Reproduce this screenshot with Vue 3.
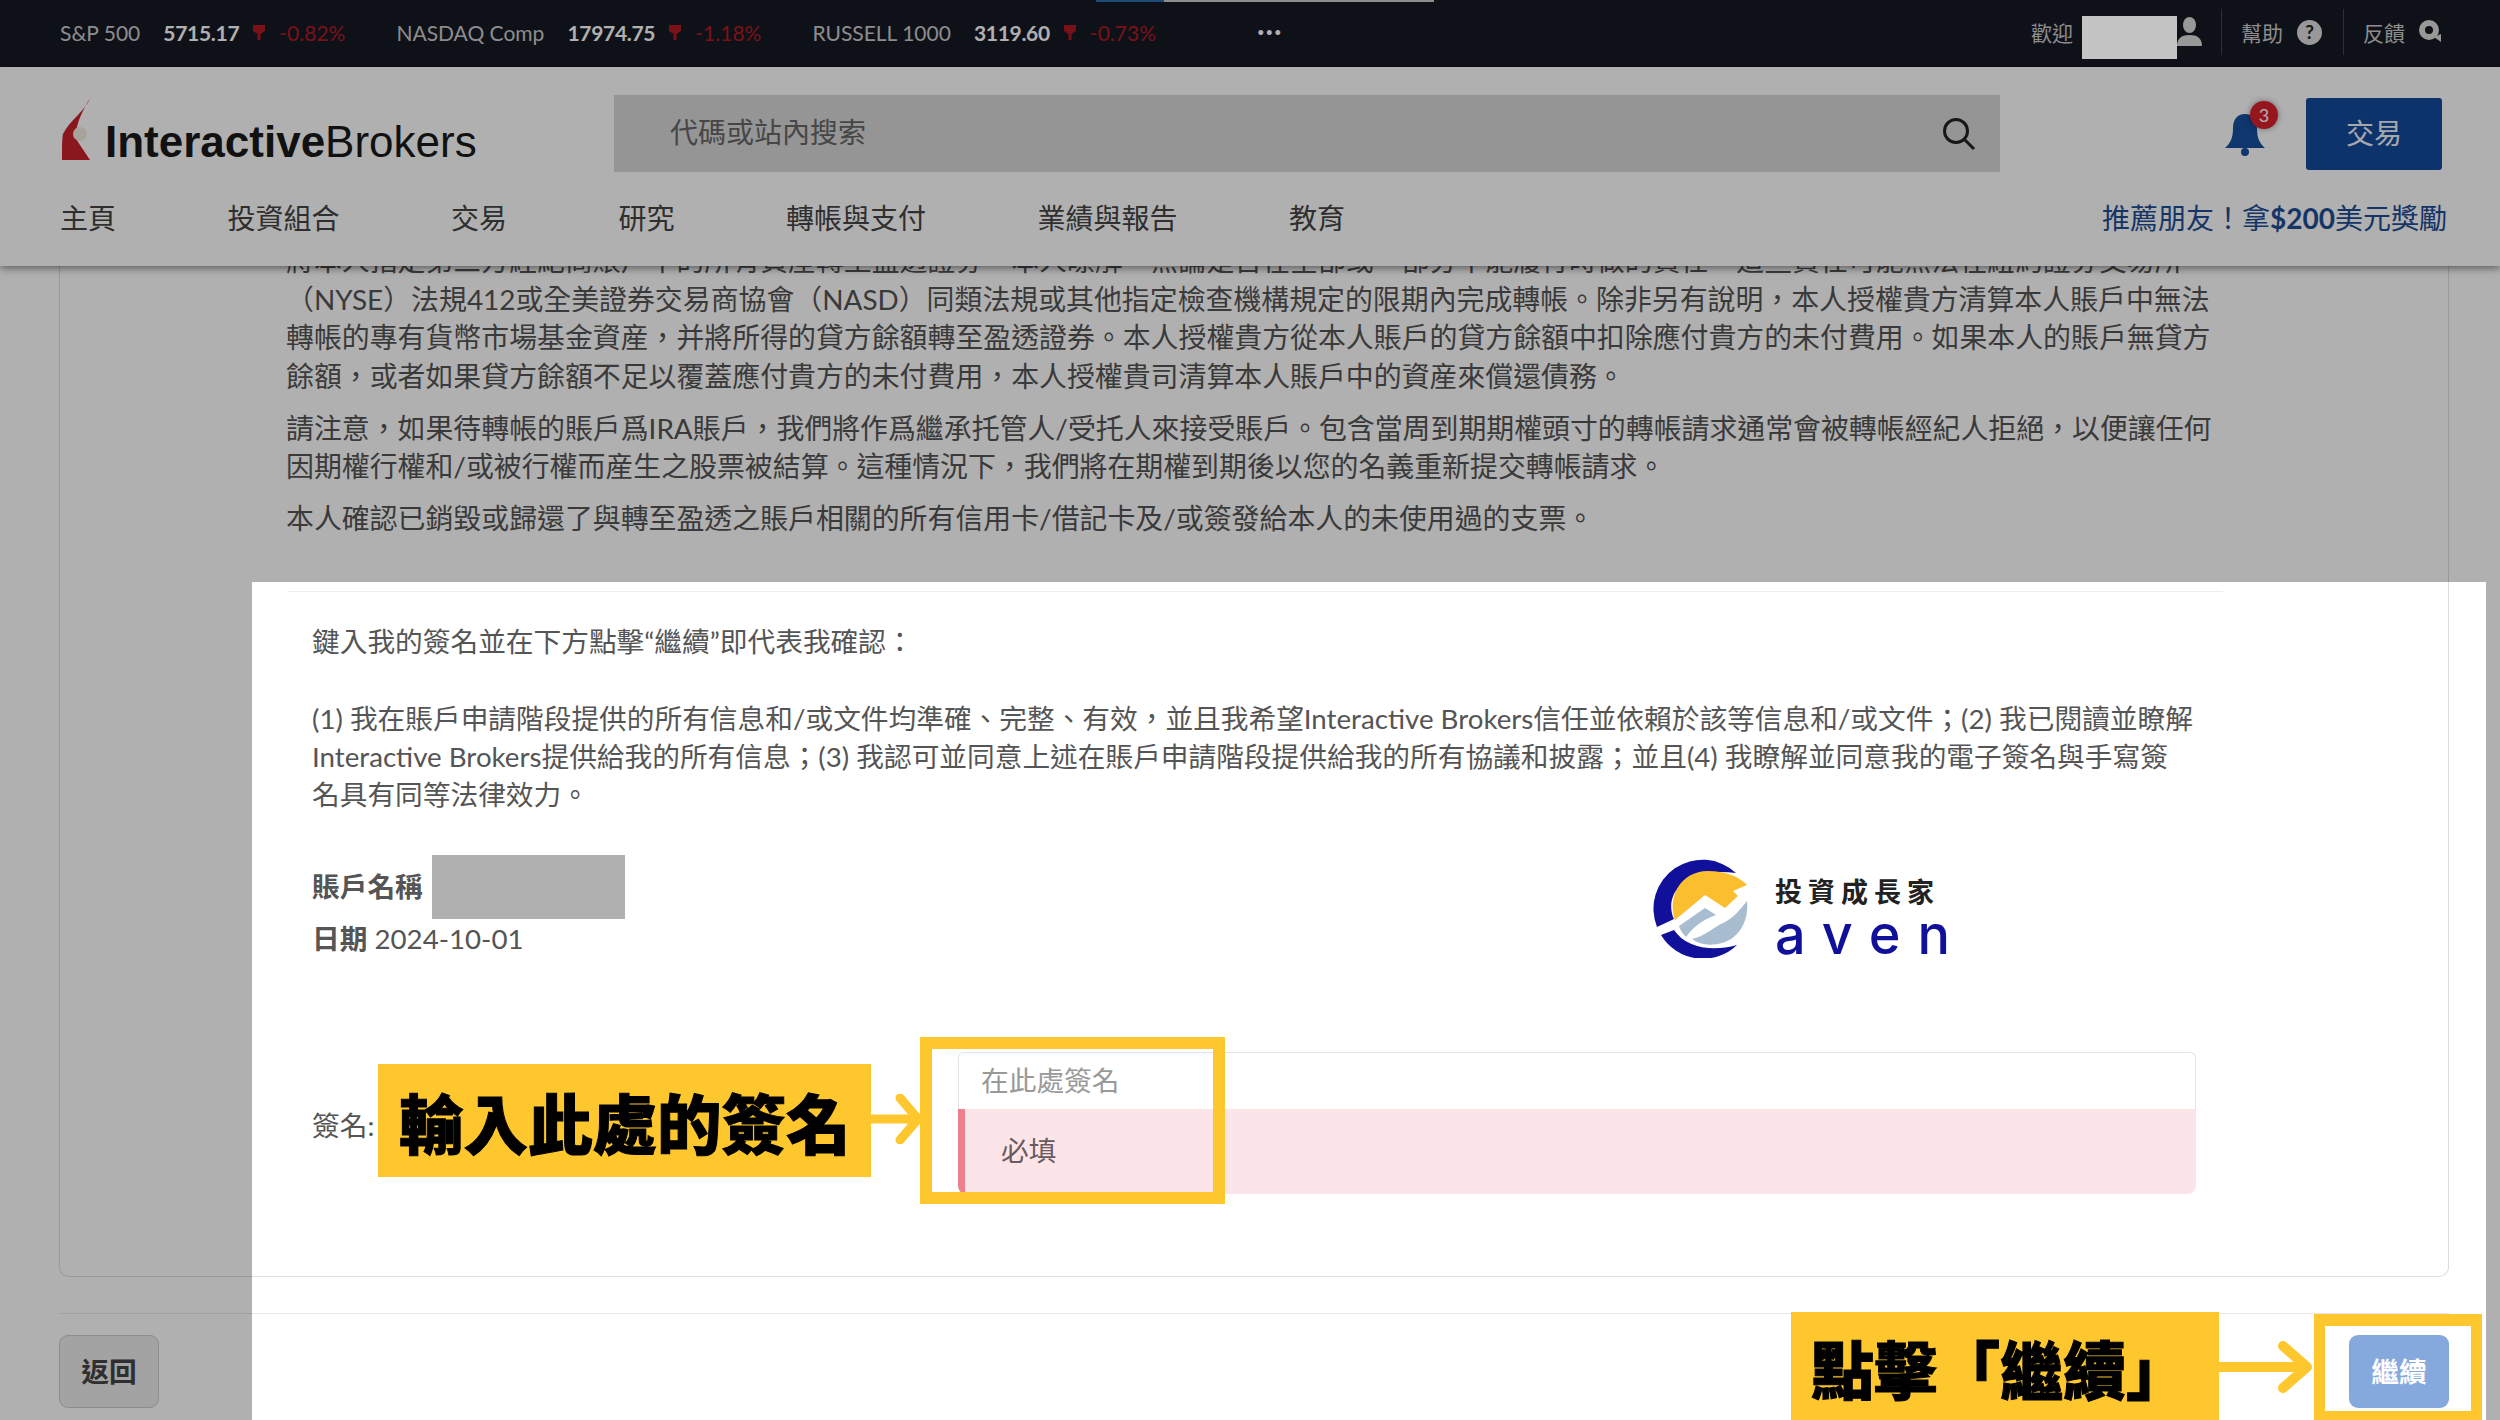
<template>
  <div class="page">
    <div class="topbar">
      <span class="tab tab-blue"></span>
      <span class="tab tab-grey"></span>
      <div class="tickers">
        <div v-for="t in tickers" :key="t.name" class="ticker">
          <span>{{ t.name }}</span>
          <b>{{ t.value }}</b>
          <svg class="caret" width="12" height="15" viewBox="0 0 12 15"><path d="M0 0h12v6L7.500 9v6h-3V9L0 6z" fill="#b01a24"/></svg>
          <span class="pct">{{ t.pct }}</span>
        </div>
        <span class="more">•••</span>
      </div>
      <div class="user">
        <span class="welcome">歡迎</span>
        <span class="user-name"></span>
        <svg class="i-person" width="27" height="30" viewBox="0 0 27 30"><ellipse cx="13.500" cy="8" rx="6.500" ry="8" fill="#ddd"/><path d="M1 29c0-8 5-11 12.500-11S26 21 26 29z" fill="#ddd"/></svg>
        <span class="sep"></span>
        <span>幫助</span>
        <svg class="i-help" width="25" height="25" viewBox="0 0 25 25"><circle cx="12.500" cy="12.500" r="12.500" fill="#ddd"/><text x="12.500" y="19" text-anchor="middle" class="i-help-text">?</text></svg>
        <span class="sep sep-2"></span>
        <span>反饋</span>
        <svg class="i-feedback" width="24" height="24" viewBox="0 0 24 24"><circle cx="10" cy="10" r="7" fill="none" stroke="#ddd" stroke-width="6"/><path d="M15 17l7 5v-8z" fill="#ddd"/></svg>
      </div>
    </div>

    <header class="header">
      <div class="brand-row">
        <div class="logo">
          <svg width="31" height="62" viewBox="0 0 31 62">
            <path d="M28 0C24 12 7 23 1 36 0 40 0 50 0 62h28L16 44C11 36 16 20 28 0z" fill="#c8202c"/>
            <circle cx="18" cy="36" r="7" fill="#f4ece0"/>
          </svg>
          <span class="logo-text"><b>Interactive</b>Brokers</span>
        </div>
        <div class="search">
          <span class="search-hint">代碼或站內搜索</span>
          <svg width="34" height="34" viewBox="0 0 34 34"><circle cx="14" cy="14" r="11.500" fill="none" stroke="#222" stroke-width="3"/><path d="M22 22l10 10" stroke="#222" stroke-width="3"/></svg>
        </div>
        <div class="bell">
          <svg width="44" height="44" viewBox="0 0 44 44"><path d="M22 2c-8 0-12 6-12 14 0 9-2 15-8 20h40c-6-5-8-11-8-20 0-8-4-14-12-14z" fill="#16509f"/><circle cx="22" cy="40" r="4" fill="#16509f"/></svg>
          <span class="badge">3</span>
        </div>
        <button class="trade">交易</button>
      </div>
      <nav class="nav">
        <a v-for="item in navItems" :key="item">{{ item }}</a>
        <a class="promo">推薦朋友！拿<b>$200</b>美元獎勵</a>
      </nav>
    </header>

    <main class="main">
      <section class="panel">
        <div class="terms">
          <p>將本人指定第三方經紀商賬戶中的所有資産轉至盈透證券。本人瞭解，無論是否在全部或一部分不能履行時做的責任，這些責任可能無法在紐約證券交易所<br>（NYSE）法規412或全美證券交易商協會（NASD）同類法規或其他指定檢查機構規定的限期內完成轉帳。除非另有說明，本人授權貴方清算本人賬戶中無法<br>轉帳的專有貨幣市場基金資産，并將所得的貸方餘額轉至盈透證券。本人授權貴方從本人賬戶的貸方餘額中扣除應付貴方的未付費用。如果本人的賬戶無貸方<br>餘額，或者如果貸方餘額不足以覆蓋應付貴方的未付費用，本人授權貴司清算本人賬戶中的資産來償還債務。</p>
          <p>請注意，如果待轉帳的賬戶爲IRA賬戶，我們將作爲繼承托管人/受托人來接受賬戶。包含當周到期期權頭寸的轉帳請求通常會被轉帳經紀人拒絕，以便讓任何<br>因期權行權和/或被行權而産生之股票被結算。這種情況下，我們將在期權到期後以您的名義重新提交轉帳請求。</p>
          <p>本人確認已銷毀或歸還了與轉至盈透之賬戶相關的所有信用卡/借記卡及/或簽發給本人的未使用過的支票。</p>
        </div>
        <hr class="rule">
        <div class="confirm">
          <p class="lead">鍵入我的簽名並在下方點擊“繼續”即代表我確認：</p>
          <p class="clauses">(1) 我在賬戶申請階段提供的所有信息和/或文件均準確、完整、有效，並且我希望Interactive Brokers信任並依賴於該等信息和/或文件；(2) 我已閱讀並瞭解<br>Interactive Brokers提供給我的所有信息；(3) 我認可並同意上述在賬戶申請階段提供給我的所有協議和披露；並且(4) 我瞭解並同意我的電子簽名與手寫簽<br>名具有同等法律效力。</p>
          <div class="account"><b>賬戶名稱</b><span class="redacted"></span></div>
          <div class="date"><b>日期</b> 2024-10-01</div>
          <div class="sign-row">
            <label class="sign-label">簽名:</label>
            <div class="sign-field">
              <div class="sign-input">在此處簽名</div>
              <div class="sign-alert">必填</div>
            </div>
          </div>
        </div>
      </section>
      <footer class="footer">
        <button class="btn-back">返回</button>
        <button class="btn-next">繼續</button>
      </footer>
    </main>

    <div class="spotlight"></div>
    <span class="user-cover"></span>

    <div class="watermark">
      <svg width="100" height="100" viewBox="0 0 100 100">
        <path d="M86 15A49 49 0 0 0 7 69L24 61C14 40 30 8 86 15Z" fill="#10109a"/>
        <path d="M11 77L24 72C36 90 62 94 87 87A49 49 0 0 1 11 77Z" fill="#10109a"/>
        <path d="M25 62C17 40 30 13 58 13 75 13 88 18 97 27L83 33 88 38 75 50 55 37Z" fill="#fbbe2e"/>
        <path d="M29 68L55 50 66 57C52 62 42 70 36 79 33 76 30 72 29 68Z" fill="#a9bdd0"/>
        <path d="M97 43C99 62 90 80 72 85 60 88 50 87 42 81 55 78 62 70 75 64 83 60 90 52 97 43Z" fill="#a9bdd0"/>
      </svg>
      <div class="wm-text">
        <div class="wm-cn">投資成長家</div>
        <div class="wm-en">aven</div>
      </div>
    </div>

    <div class="note note-sign">輸入此處的簽名</div>
    <svg class="arrow arrow-sign" width="52" height="50" viewBox="0 0 52 50"><path d="M0 25h48M30 4l18 21-18 21" fill="none" stroke="#fec72e" stroke-width="9" stroke-linecap="round" stroke-linejoin="round"/></svg>
    <div class="frame frame-sign"></div>

    <div class="note note-next">點擊「繼續」</div>
    <svg class="arrow arrow-next" width="94" height="52" viewBox="0 0 94 52"><path d="M0 26h88M64 5l24 21-24 21" fill="none" stroke="#fec72e" stroke-width="10" stroke-linecap="round" stroke-linejoin="round"/></svg>
    <div class="frame frame-next"></div>
  </div>
</template>

<script setup>
const tickers = [
  { name: 'S&P 500', value: '5715.17', pct: '-0.82%' },
  { name: 'NASDAQ Comp', value: '17974.75', pct: '-1.18%' },
  { name: 'RUSSELL 1000', value: '3119.60', pct: '-0.73%' }
]

const navItems = ['主頁', '投資組合', '交易', '研究', '轉帳與支付', '業績與報告', '教育']
</script>

<style>
html,
body {
  margin: 0;
  background: #fff;
}
</style>

<style scoped>
.page {
  position: relative;
  width: 2500px;
  height: 1420px;
  overflow: hidden;
  display: flex;
  flex-direction: column;
  background: #fff;
  color: #555;
  font-family: Lato, "Noto Sans CJK TC", sans-serif;
  font-size: 27.700px;
}

.topbar {
  position: relative;
  flex: none;
  height: 67px;
  box-sizing: border-box;
  padding: 0 57px 3px 60px;
  display: flex;
  align-items: center;
  justify-content: space-between;
  background: #171925;
  color: #ccc;
  font-size: 21px;
}

.tab {
  position: absolute;
  top: 0;
  height: 2px;
}

.tab-blue {
  left: 1096px;
  width: 68px;
  background: #2a6fa8;
}

.tab-grey {
  left: 1164px;
  width: 270px;
  background: #ccc;
}

.tickers,
.ticker,
.user {
  display: flex;
  align-items: center;
}

.tickers {
  gap: 51px;
}

.ticker {
  gap: 14px;
}

.ticker b {
  color: #fff;
  margin-left: 9px;
  letter-spacing: -0.300px;
}

.pct {
  color: #b01a24;
}

.more {
  font-size: 13px;
  letter-spacing: 1px;
  color: #fff;
  margin-left: 50px;
}

.user {
  gap: 14px;
}

.user-name {
  width: 95px;
  height: 43px;
  margin-left: -6px;
  margin-right: -14px;
}

.i-help-text {
  font-size: 19px;
  font-weight: 700;
  fill: #222;
}

.sep {
  width: 1px;
  height: 46px;
  margin: 0 5px 0 4px;
  background: #444;
}

.sep-2 {
  margin-left: 7px;
}

.header {
  position: relative;
  z-index: 2;
  flex: none;
  height: 199px;
  box-sizing: border-box;
  padding: 28px 58px 0 60px;
  background: #fff;
  box-shadow: 0 2px 8px rgba(0, 0, 0, 0.5);
}

.brand-row {
  display: flex;
  align-items: center;
  height: 77px;
}

.logo {
  width: 554px;
  flex: none;
  display: flex;
  align-items: flex-end;
  gap: 12px;
  height: 62px;
  margin-top: -9px;
  padding-left: 2px;
  box-sizing: border-box;
}

.logo-text {
  font-family: "Liberation Sans", Arial, sans-serif;
  font-size: 44px;
  line-height: 36px;
  color: #1a1a1a;
}

.logo-text b {
  font-weight: 700;
}

.search {
  width: 1386px;
  height: 77px;
  flex: none;
  box-sizing: border-box;
  padding: 0 24px 0 56px;
  display: flex;
  align-items: center;
  justify-content: space-between;
  background: #d8d8d8;
  font-size: 28px;
  color: #666;
}

.search-hint {
  margin-bottom: 5px;
}

.bell {
  position: relative;
  margin-left: 223px;
  height: 44px;
}

.badge {
  position: absolute;
  right: -11px;
  top: -11px;
  width: 28px;
  height: 28px;
  border-radius: 50%;
  background: #d8202c;
  color: #fff;
  font-size: 18px;
  line-height: 28px;
  text-align: center;
  box-shadow: 0 0 6px rgba(0, 0, 0, 0.4);
}

.trade {
  width: 136px;
  height: 72px;
  margin-left: auto;
  padding-bottom: 4px;
  border: none;
  border-radius: 3px;
  background: #144b9f;
  color: #f2f4f8;
  font: inherit;
  font-size: 28px;
}

.nav {
  display: flex;
  gap: 111.500px;
  margin: 26px -5px 0 0;
  font-size: 28px;
  line-height: 40px;
  color: #444;
}

.promo {
  margin-left: auto;
  color: #1f4d96;
  font-weight: 400;
}

.main {
  flex: 1;
  min-height: 0;
  display: flex;
  flex-direction: column;
}

.panel {
  flex: none;
  height: 1036px;
  box-sizing: border-box;
  margin: -25px 51px 0 59px;
  padding-left: 226px;
  border: 1px solid #dedede;
  border-top: none;
  border-radius: 0 0 10px 10px;
}

.terms {
  font-size: 27.900px;
  line-height: 38.500px;
  white-space: nowrap;
}

.terms p {
  margin: 0 0 13.500px;
}

.rule {
  width: 1935px;
  height: 1px;
  margin: 53px 0 0 2px;
  border: none;
  background: #ececec;
}

.confirm {
  padding: 31px 0 0 26px;
  line-height: 38px;
}

.lead,
.clauses {
  margin: 0;
  white-space: nowrap;
}

.clauses {
  margin-top: 39px;
}

.account {
  display: flex;
  align-items: center;
  gap: 9px;
  margin-top: 41px;
}

.account b,
.date b {
  font-weight: 700;
}

.redacted {
  width: 193px;
  height: 64px;
  background: #b0b0b0;
}

.date {
  margin-top: 1px;
}

.sign-row {
  display: grid;
  grid-template-columns: 646px 1238px;
  align-items: center;
  margin-top: 94px;
}

.sign-label {
  padding-top: 6px;
}

.sign-input {
  height: 57px;
  box-sizing: border-box;
  padding-left: 22px;
  display: flex;
  align-items: center;
  border: 1px solid #e4e4e4;
  border-bottom: none;
  border-radius: 6px 6px 0 0;
  color: #999;
}

.sign-alert {
  height: 85px;
  box-sizing: border-box;
  padding-left: 36px;
  display: flex;
  align-items: center;
  border-left: 7px solid #ef7f8d;
  border-radius: 0 0 8px 8px;
  background: #fbe5e8;
  color: #6b5a5e;
}

.footer {
  display: flex;
  justify-content: space-between;
  margin: 36px 51px 0 59px;
  padding-top: 21px;
  border-top: 1px solid #e8e8e8;
}

.btn-back,
.btn-next {
  height: 73px;
  padding-bottom: 5px;
  border-radius: 9px;
  font: inherit;
  font-weight: 700;
}

.btn-back {
  width: 100px;
  border: 1px solid #ccc;
  background: #ececec;
  color: #444;
}

.btn-next {
  width: 100px;
  border: none;
  background: #85a9dc;
  color: #fff;
}

/* dims everything but the modal area */
.spotlight {
  position: absolute;
  z-index: 3;
  left: 252px;
  top: 582px;
  width: 2234px;
  height: 838px;
  box-shadow: 0 0 0 3000px rgba(0, 0, 0, 0.31);
  pointer-events: none;
}

.user-cover {
  position: absolute;
  z-index: 4;
  left: 2082px;
  top: 16px;
  width: 95px;
  height: 43px;
  background: #c4c4c4;
}

.watermark {
  position: absolute;
  z-index: 4;
  left: 1650px;
  top: 858px;
  display: flex;
  gap: 25px;
}

.wm-text {
  color: #10109a;
}

.wm-cn {
  margin-top: 16px;
  font-size: 27px;
  line-height: 36px;
  font-weight: 700;
  letter-spacing: 6px;
  color: #222;
}

.wm-en {
  font-family: Inter, sans-serif;
  font-size: 54px;
  line-height: 50px;
  font-weight: 500;
  letter-spacing: 17px;
}

.note {
  position: absolute;
  z-index: 4;
  box-sizing: border-box;
  display: flex;
  align-items: center;
  background: #fec72e;
  color: #000;
  font-family: "Noto Sans CJK TC", sans-serif;
  font-weight: 900;
  white-space: nowrap;
  -webkit-text-stroke: 1px #000;
}

.note-sign {
  left: 378px;
  top: 1064px;
  width: 493px;
  height: 113px;
  padding-left: 21px;
  font-size: 64.500px;
}

.note-next {
  left: 1791px;
  top: 1312px;
  width: 428px;
  height: 108px;
  padding-left: 20px;
  font-size: 63px;
}

.arrow {
  position: absolute;
  z-index: 4;
}

.arrow-sign {
  left: 870px;
  top: 1094px;
}

.arrow-next {
  left: 2219px;
  top: 1341px;
}

.frame {
  position: absolute;
  z-index: 4;
  box-sizing: border-box;
  border-style: solid;
  border-color: #fec72e;
}

.frame-sign {
  left: 920px;
  top: 1037px;
  width: 305px;
  height: 167px;
  border-width: 12px;
}

.frame-next {
  left: 2314px;
  top: 1314px;
  width: 168px;
  height: 106px;
  border-width: 12px 11px 9px;
}
</style>
